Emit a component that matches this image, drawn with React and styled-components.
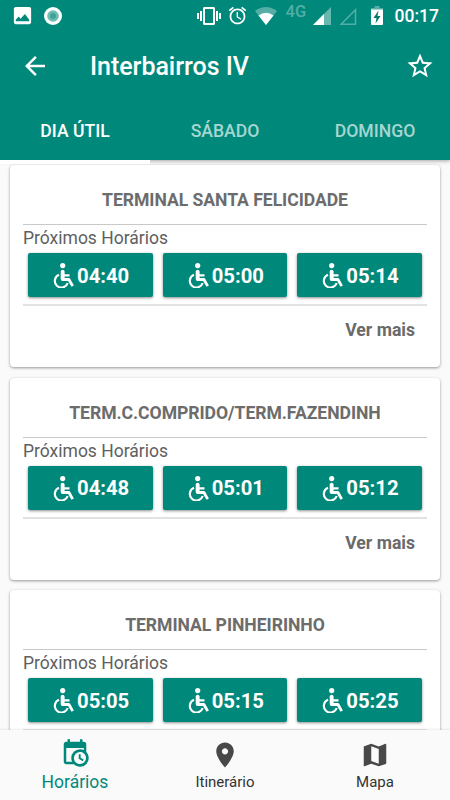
import React from "react";
import styled, { createGlobalStyle } from "styled-components";

const GlobalStyle = createGlobalStyle`
  * {
    box-sizing: border-box;
  }

  body {
    margin: 0;
    background-color: #fafafa;
    font-family: Roboto, "Liberation Sans", sans-serif;
  }
`;

const Screen = styled.div`
  display: flex;
  flex-direction: column;
  width: 450px;
  height: 800px;
  overflow: hidden;
  background-color: #fafafa;
`;

const Header = styled.header`
  position: relative;
  z-index: 1;
  flex: none;
  height: 160px;
  background-color: #00897b;
  color: white;
  box-shadow: 0 1px 4px rgba(0, 0, 0, 0.35);
`;

const StatusBar = styled.div`
  display: flex;
  align-items: center;
  height: 31px;
  padding: 0 11px;
`;

const Icon = styled.svg`
  display: block;
  flex: none;
  width: ${(props) => props.$w}px;
  height: ${(props) => props.$h || props.$w}px;
  margin-left: ${(props) => props.$left || 0}px;
  fill: currentColor;
`;

const Network = styled.span`
  width: 21px;
  height: 24px;
  margin-left: 9px;
  font-size: 16.5px;
  font-weight: 500;
  line-height: 16px;
  color: #55aea5;
`;

const Clock = styled.span`
  margin-left: auto;
  font-size: 17.5px;
  font-weight: 500;
  line-height: 30px;
`;

const Toolbar = styled.div`
  display: flex;
  align-items: center;
  height: 69px;
  padding: 0 15px 0 20px;
`;

const Title = styled.h1`
  flex: 1;
  margin: 0 0 0 40px;
  padding-top: 2px;
  font-size: 25px;
  font-weight: 500;
  line-height: 30px;
  letter-spacing: -0.03px;
`;

const Tabs = styled.nav`
  display: grid;
  grid-template-columns: repeat(3, 1fr);
  height: 60px;
`;

const Tab = styled.div`
  padding-top: 2px;
  border-bottom: 4px solid ${(props) => (props.$active ? "white" : "transparent")};
  font-size: 17.6px;
  font-weight: 500;
  line-height: 58px;
  text-align: center;
  color: ${(props) => (props.$active ? "white" : "#a6d6d1")};
`;

const List = styled.main`
  display: flex;
  flex-direction: column;
  flex: 1;
  gap: 10.5px;
  min-height: 0;
  padding: 5px 10px 0;
  overflow: hidden;
`;

const Card = styled.section`
  flex: none;
  height: 202px;
  padding: 0 13px;
  border-radius: 4px;
  background-color: white;
  box-shadow: 0 1px 3px rgba(0, 0, 0, 0.4);
`;

const Stop = styled.h2`
  height: 60px;
  margin: 0;
  padding-top: 10px;
  border-bottom: 1px solid #c9c9c9;
  font-size: 17.6px;
  font-weight: 700;
  line-height: 51px;
  letter-spacing: -0.05px;
  text-align: center;
  white-space: nowrap;
  color: #6c6c6c;
`;

const Caption = styled.div`
  height: 28px;
  font-size: 17.5px;
  line-height: 26px;
  color: #606060;
`;

const Times = styled.div`
  display: flex;
  gap: 10px;
  height: 53px;
  padding: 0 5px;
  border-bottom: 2px solid #e2e2e2;
`;

const TimeButton = styled.button`
  display: flex;
  flex: 1;
  align-items: center;
  height: 44px;
  padding: 1px 0 0 24px;
  border: 0;
  border-radius: 2px;
  background-color: #00897b;
  box-shadow: 0 1px 3px rgba(0, 0, 0, 0.45);
  font-family: inherit;
  font-size: 20.3px;
  font-weight: 700;
  color: white;
`;

const More = styled.div`
  padding-right: 12px;
  font-size: 17.6px;
  font-weight: 700;
  line-height: 49px;
  text-align: right;
  color: #6a6a6a;
`;

const BottomNav = styled.nav`
  position: relative;
  display: grid;
  flex: none;
  grid-template-columns: repeat(3, 1fr);
  height: 70px;
  background-color: #fafafa;
  box-shadow: 0 -1px 2px rgba(0, 0, 0, 0.08);
`;

const NavItem = styled.div`
  display: flex;
  flex-direction: column;
  align-items: center;
  padding-top: ${(props) => (props.$active ? 8 : 10)}px;
  font-size: ${(props) => (props.$active ? 17.5 : 15)}px;
  line-height: ${(props) => (props.$active ? 28 : 25)}px;
  color: ${(props) => (props.$active ? "#00897b" : "#333")};

  svg {
    color: ${(props) => (props.$active ? "#00897b" : "#484848")};
  }
`;

const stops = [
  { name: "TERMINAL SANTA FELICIDADE", times: ["04:40", "05:00", "05:14"] },
  { name: "TERM.C.COMPRIDO/TERM.FAZENDINH", times: ["04:48", "05:01", "05:12"] },
  { name: "TERMINAL PINHEIRINHO", times: ["05:05", "05:15", "05:25"] },
];

function Wheelchair() {
  return (
    <Icon $w={25} viewBox="0 0 25 25">
      <circle cx="10.7" cy="2.6" r="2.6" />
      <path d="M8.700 8.200a2 2 0 0 1 3.900 0v3.100h4.900v2.200h-4.900v1.400h4.100c.7 0 1.200.3 1.500.9l3.700 6.700-2.400 1.300-3.400-5.900h-5.500a1.900 1.900 0 0 1-1.900-1.900z" />
      <path
        d="M7 11.800A6.600 6.600 0 1 0 15.700 20"
        fill="none"
        stroke="currentColor"
        strokeWidth="2.1"
      />
    </Icon>
  );
}

function Status() {
  return (
    <StatusBar>
      <Icon $w={23} viewBox="0 0 24 24">
        <path d="M21 19V5c0-1.1-.9-2-2-2H5c-1.1 0-2 .9-2 2v14c0 1.1.9 2 2 2h14c1.1 0 2-.9 2-2zM5 18v-1.500l3-3.500 2 2.500L14.500 10.500l2 2.500 2.500 3.500V18z" />
      </Icon>
      <Icon $w={20} $left={8.5} viewBox="0 0 20 20">
        <circle cx="10" cy="10" r="9" />
        <circle cx="10" cy="10" r="5.8" fill="#70bbb3" />
        <circle cx="10" cy="10" r="3" fill="#3ba497" />
      </Icon>
      <Icon $w={24} $left={134} viewBox="0 0 24 24">
        <path d="M0 15h2V9H0v6zm3 2h2V7H3v10zm19-8v6h2V9h-2zm-3 8h2V7h-2v10zM16.500 3h-9C6.670 3 6 3.670 6 4.500v15c0 .83.67 1.500 1.500 1.500h9c.83 0 1.500-.67 1.500-1.500v-15c0-.83-.67-1.500-1.500-1.500zM16 19H8V5h8v14z" />
      </Icon>
      <Icon $w={21} $left={6} viewBox="0 0 24 24">
        <path d="M22 5.720l-4.600-3.860-1.290 1.530 4.600 3.860L22 5.720zM7.880 3.390L6.600 1.860 2 5.710l1.290 1.530 4.590-3.850zM12.500 8H11v6l4.750 2.850.75-1.230-4-2.370V8zM12 4c-4.970 0-9 4.030-9 9s4.020 9 9 9c4.970 0 9-4.030 9-9s-4.030-9-9-9zm0 16c-3.870 0-7-3.130-7-7s3.130-7 7-7 7 3.130 7 7-3.130 7-7 7z" />
      </Icon>
      <Icon $w={22} $h={18} $left={7} viewBox="0 0 22 18">
        <path d="M0 4Q11-4 22 4L11 18z" fill="#55aea5" />
        <path d="M3.500 8.500Q11 3 18.500 8.500L11 18z" />
      </Icon>
      <Network>4G</Network>
      <Icon $w={18} $left={6.5} viewBox="0 0 18 18">
        <path d="M0 18L18 0v18z" fill="#66b8af" />
        <path d="M0 18L11 7v11z" />
      </Icon>
      <Icon $w={18} $left={8} viewBox="0 0 18 18">
        <path d="M2 17.200L16.500 2.700v14.500z" fill="none" stroke="#55aea5" strokeWidth="1.5" />
      </Icon>
      <Icon $w={12} $h={19} $left={14} viewBox="0 0 12 19">
        <path d="M3.500 0h5v2H12v3H0V2h3.500z" fill="#55aea5" />
        <path d="M0 3.500h12V18a1 1 0 0 1-1 1H1a1 1 0 0 1-1-1z" />
        <path d="M7.500 4.500L2.500 12h3L4.500 17.500l5-7.500h-3z" fill="#00796b" />
      </Icon>
      <Clock>00:17</Clock>
    </StatusBar>
  );
}

export default function App() {
  return (
    <Screen>
      <GlobalStyle />
      <Header>
        <Status />
        <Toolbar>
          <Icon $w={30} viewBox="0 0 24 24">
            <path d="M20 11H7.830l5.590-5.590L12 4l-8 8 8 8 1.410-1.410L7.830 13H20v-2z" />
          </Icon>
          <Title>Interbairros IV</Title>
          <Icon $w={30} viewBox="0 0 24 24">
            <path d="M22 9.240l-7.190-.62L12 2 9.190 8.630 2 9.240l5.460 4.730L5.820 21 12 17.270 18.180 21l-1.630-7.030L22 9.240zM12 15.400l-3.760 2.270 1-4.280-3.320-2.880 4.380-.38L12 6.100l1.710 4.040 4.380.38-3.320 2.880 1 4.280L12 15.400z" />
          </Icon>
        </Toolbar>
        <Tabs>
          <Tab $active>DIA ÚTIL</Tab>
          <Tab>SÁBADO</Tab>
          <Tab>DOMINGO</Tab>
        </Tabs>
      </Header>
      <List>
        {stops.map((stop) => (
          <Card key={stop.name}>
            <Stop>{stop.name}</Stop>
            <Caption>Próximos Horários</Caption>
            <Times>
              {stop.times.map((time) => (
                <TimeButton key={time}>
                  <Wheelchair />
                  {time}
                </TimeButton>
              ))}
            </Times>
            <More>Ver mais</More>
          </Card>
        ))}
      </List>
      <BottomNav>
        <NavItem $active>
          <Icon $w={30} viewBox="0 0 24 24">
            <path d="M15,13H16.500V15.820L18.940,17.230L18.190,18.530L15,16.690V13M19,8H5V19H9.670C9.240,18.090 9,17.070 9,16A7,7 0 0,1 16,9C17.070,9 18.090,9.240 19,9.670V8M5,21C3.890,21 3,20.100 3,19V5C3,3.890 3.890,3 5,3H6V1H8V3H16V1H18V3H19A2,2 0 0,1 21,5V11.100C22.240,12.360 23,14.090 23,16A7,7 0 0,1 16,23C14.090,23 12.360,22.240 11.100,21H5M16,11.150A4.850,4.850 0 0,0 11.150,16C11.150,18.680 13.320,20.850 16,20.850A4.850,4.850 0 0,0 20.850,16C20.850,13.320 18.680,11.150 16,11.150Z" />
          </Icon>
          Horários
        </NavItem>
        <NavItem>
          <Icon $w={30} viewBox="0 0 24 24">
            <path d="M12 2C8.130 2 5 5.130 5 9c0 5.250 7 13 7 13s7-7.750 7-13c0-3.870-3.130-7-7-7zm0 9.500c-1.380 0-2.500-1.120-2.500-2.500s1.120-2.500 2.500-2.500 2.500 1.120 2.500 2.500-1.120 2.500-2.500 2.500z" />
          </Icon>
          Itinerário
        </NavItem>
        <NavItem>
          <Icon $w={30} viewBox="0 0 24 24">
            <path d="M15,19L9,16.890V5L15,7.110M20.500,3C20.440,3 20.390,3 20.340,3L15,5.100L9,3L3.360,4.900C3.150,4.970 3,5.150 3,5.380V20.500A0.500,0.500 0 0,0 3.500,21C3.550,21 3.610,21 3.660,20.970L9,18.900L15,21L20.640,19.100C20.850,19 21,18.850 21,18.620V3.500A0.500,0.500 0 0,0 20.500,3Z" />
          </Icon>
          Mapa
        </NavItem>
      </BottomNav>
    </Screen>
  );
}
